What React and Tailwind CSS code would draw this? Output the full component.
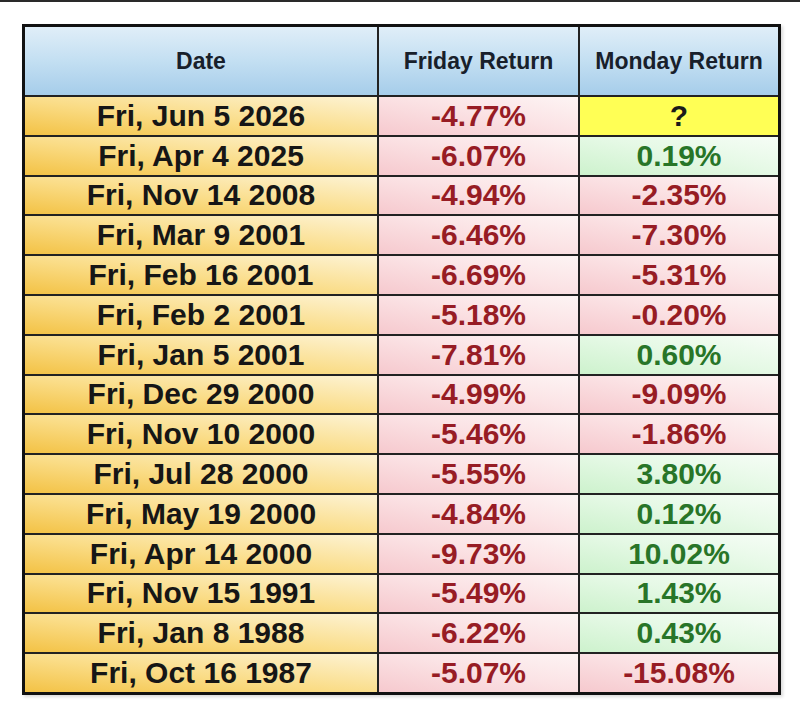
const rows = [
  ['Fri, Jun 5 2026', '-4.77%', '?'],
  ['Fri, Apr 4 2025', '-6.07%', '0.19%'],
  ['Fri, Nov 14 2008', '-4.94%', '-2.35%'],
  ['Fri, Mar 9 2001', '-6.46%', '-7.30%'],
  ['Fri, Feb 16 2001', '-6.69%', '-5.31%'],
  ['Fri, Feb 2 2001', '-5.18%', '-0.20%'],
  ['Fri, Jan 5 2001', '-7.81%', '0.60%'],
  ['Fri, Dec 29 2000', '-4.99%', '-9.09%'],
  ['Fri, Nov 10 2000', '-5.46%', '-1.86%'],
  ['Fri, Jul 28 2000', '-5.55%', '3.80%'],
  ['Fri, May 19 2000', '-4.84%', '0.12%'],
  ['Fri, Apr 14 2000', '-9.73%', '10.02%'],
  ['Fri, Nov 15 1991', '-5.49%', '1.43%'],
  ['Fri, Jan 8 1988', '-6.22%', '0.43%'],
  ['Fri, Oct 16 1987', '-5.07%', '-15.08%'],
]

const dateBg = 'bg-[linear-gradient(to_top_right,#f3c245_0%,#fadc86_45%,#fdf3d4_100%)]'
const redBg = 'bg-[linear-gradient(to_top_right,#f6c9ce_0%,#fbe3e5_55%,#fdf4f4_100%)]'
const greenBg = 'bg-[linear-gradient(to_top_right,#cdf2cd_0%,#e6f9e6_55%,#f6fdf6_100%)]'

function Cell({ value }) {
  if (value === '?') {
    return (
      <div className="flex-1 flex items-center justify-center bg-[#ffff55] text-[#1a1a1a]">
        ?
      </div>
    )
  }
  const negative = value.startsWith('-')
  return (
    <div
      className={`flex-1 flex items-center justify-center ${
        negative ? redBg + ' text-[#971c24]' : greenBg + ' text-[#287528]'
      }`}
    >
      {value}
    </div>
  )
}

export default function App() {
  return (
    <div className="w-[800px] h-[723px] bg-white font-['Liberation_Sans',Arial,sans-serif] font-bold">
      {/* line at the top */}
      <div className="h-[2px] bg-[#2a2a2a]" />

      <div className="pt-[22px] pl-[22px]">
        <div className="w-[759px] border-[3px] border-[#111] shadow-[2px_2px_3px_rgba(0,0,0,0.15)]">
          {/* header */}
          <div className="flex h-[70px] border-b-2 border-[#222] text-[23px] text-[#18202b] bg-[linear-gradient(to_bottom,#e0eef8_0%,#c3dff2_50%,#a6cdea_100%)]">
            <div className="w-[354px] flex items-center justify-center border-r-2 border-[#222]">Date</div>
            <div className="w-[201px] flex items-center justify-center border-r-2 border-[#222]">Friday Return</div>
            <div className="flex-1 flex items-center justify-center">Monday Return</div>
          </div>

          {rows.map(([date, fri, mon], i) => (
            <div
              key={date}
              className={`flex text-[30px] leading-none ${
                i < rows.length - 1 ? 'h-[39.8px] border-b-2 border-[#222]' : 'h-[37.8px]'
              }`}
            >
              <div className={`w-[354px] flex items-center justify-center border-r-2 border-[#222] text-[#161616] ${dateBg}`}>
                {date}
              </div>
              <div className={`w-[201px] flex items-center justify-center border-r-2 border-[#222] text-[#971c24] ${redBg}`}>
                {fri}
              </div>
              <Cell value={mon} />
            </div>
          ))}
        </div>
      </div>
    </div>
  )
}
